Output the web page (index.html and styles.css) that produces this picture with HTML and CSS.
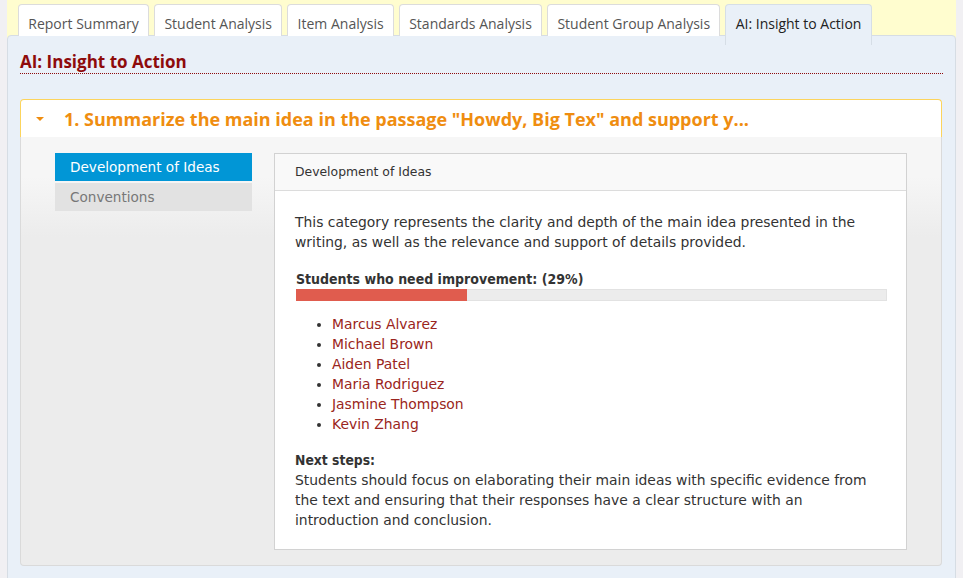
FILE: index.html
```html
<!DOCTYPE html>
<html>
<head>
<meta charset="utf-8">
<link rel="stylesheet" href="styles.css">
</head>
<body>
<div class="page">
  <ul class="tabs">
    <li class="tab">Report Summary</li>
    <li class="tab">Student Analysis</li>
    <li class="tab">Item Analysis</li>
    <li class="tab">Standards Analysis</li>
    <li class="tab">Student Group Analysis</li>
    <li class="tab active">AI: Insight to Action</li>
  </ul>
  <div class="panel">
    <h2 class="panel-title">AI: Insight to Action</h2>
    <div class="accordion">
      <div class="acc-header">
        <span class="caret"></span>
        <span class="acc-title">1. Summarize the main idea in the passage "Howdy, Big Tex" and support y...</span>
      </div>
      <div class="acc-body">
        <ul class="nav">
          <li class="nav-item active">Development of Ideas</li>
          <li class="nav-item">Conventions</li>
        </ul>
        <div class="card">
          <div class="card-header">Development of Ideas</div>
          <div class="card-body">
            <p class="desc">This category represents the clarity and depth of the main idea presented in the writing, as well as the relevance and support of details provided.</p>
            <div class="need-label">Students who need improvement: (29%)</div>
            <div class="bar"><div class="bar-fill" style="width:29%"></div></div>
            <ul class="students">
              <li>Marcus Alvarez</li>
              <li>Michael Brown</li>
              <li>Aiden Patel</li>
              <li>Maria Rodriguez</li>
              <li>Jasmine Thompson</li>
              <li>Kevin Zhang</li>
            </ul>
            <div class="next-label">Next steps:</div>
            <p class="next-text">Students should focus on elaborating their main ideas with specific evidence from the text and ensuring that their responses have a clear structure with an introduction and conclusion.</p>
          </div>
        </div>
      </div>
    </div>
  </div>
</div>
</body>
</html>
```
FILE: styles.css
```css
* { box-sizing: border-box; }
html, body { margin: 0; padding: 0; }
body {
  background: #f1f0f3;
  font-family: "Open Sans", sans-serif;
  height: 578px;
  overflow: hidden;
}
.page {
  margin-left: 7px;
  width: 949px;
  background: #fffdcf;
  min-height: 578px;
}
.tabs {
  list-style: none;
  margin: 0;
  padding: 4px 0 0 11px;
  display: flex;
  gap: 5px;
  position: relative;
  z-index: 2;
}
.tab {
  background: #fff;
  border: 1px solid #dcdcdc;
  border-bottom: none;
  border-radius: 4px 4px 0 0;
  color: #555;
  font-size: 14px;
  height: 32px;
  line-height: 30px;
  padding: 4px 9.3px 0;
  margin-bottom: -1px;
}
.tab.active {
  background: #e9f0f8;
  color: #222;
  border-color: #d6dee6;
  height: 41px;
  margin-bottom: -10px;
  border-radius: 4px 4px 0 0;
}
.panel {
  background: #e9f0f8;
  border: 1px solid #d6dde4;
  border-radius: 4px;
  padding: 12px 12px 20px;
  min-height: 543px;
}
.panel-title {
  margin: 4px 0 25px;
  color: #8e0b0b;
  font-size: 17px;
  font-weight: 700;
  line-height: 20px;
  padding-bottom: 1px;
  border-bottom: 1px dotted #8e0b0b;
}
.accordion {
  margin-right: 1px;
}
.acc-header {
  background: #fff;
  border: 1px solid #fcd45c;
  border-bottom: none;
  border-radius: 4px 4px 0 0;
  height: 38px;
  display: flex;
  align-items: center;
  padding-left: 15px;
}
.caret {
  width: 0;
  height: 0;
  border-left: 4px solid transparent;
  border-right: 4px solid transparent;
  border-top: 4px solid #ef8d10;
  margin-right: 20px;
  margin-top: 1px;
}
.acc-title {
  color: #ef8d10;
  font-size: 18px;
  font-weight: 700;
  white-space: nowrap;
  margin-top: 0;
}
.acc-body {
  background: linear-gradient(#f6f6f6 0, #f6f6f6 40px, #ececec 100px);
  border: 1px solid #dadada;
  border-top: none;
  border-radius: 0 0 4px 4px;
  padding: 16px 34px 15px;
  display: flex;
  gap: 22px;
  align-items: flex-start;
}
.nav {
  list-style: none;
  margin: 0;
  padding: 0;
  width: 197px;
  display: flex;
  flex-direction: column;
  gap: 2px;
  font-family: "DejaVu Sans", sans-serif;
}
.nav-item {
  background: #e2e2e2;
  color: #777;
  font-size: 13.6px;
  height: 28px;
  line-height: 28px;
  padding-left: 15px;
}
.nav-item.active {
  background: #0196d6;
  color: #fff;
}
.card {
  flex: 1;
  background: #fff;
  border: 1px solid #d2d2d2;
  font-family: "DejaVu Sans", sans-serif;
  color: #333;
}
.card-header {
  background: #f9f9f9;
  border-bottom: 1px solid #dcdcdc;
  height: 37px;
  line-height: 36px;
  padding-left: 20px;
  font-size: 12.4px;
}
.card-body {
  padding: 21px 19px 19px 20px;
  font-size: 13.9px;
  line-height: 20px;
}
.desc {
  margin: 0 0 17px;
}
.need-label {
  font-weight: 700;
  font-stretch: condensed;
  font-size: 14px;
  margin-left: 1px;
}
.bar {
  margin: 0 0 0 1px;
  height: 12px;
  background: #ececec;
  border: 1px solid #e2e2e2;
}
.bar-fill {
  background: #e05c4e;
  margin: -1px 0 0 -1px;
  height: 12px;
}
.students {
  margin: 13px 0 0;
  padding-left: 37px;
  color: #9a2520;
}
.students li::marker { color: #333; }
.next-label {
  font-weight: 700;
  font-stretch: condensed;
  font-size: 13.8px;
  margin-top: 16px;
}
.next-text {
  margin: 0;
}
```
